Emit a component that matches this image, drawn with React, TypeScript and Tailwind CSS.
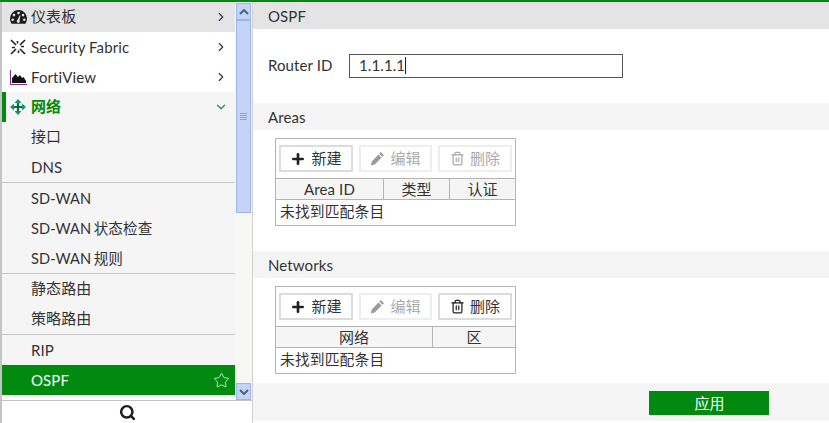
import React from "react";
import { ChevronRight, ChevronDown, Star, Search, Plus, Trash2 } from "lucide-react";

const Sub = ({ t, b, cjk, sd }: { t: string; b?: boolean; cjk?: boolean; sd?: boolean }) => (
  <div className={`h-[30px] pl-[29px] flex items-center text-[#333] bg-[#f5f5f5] ${b ? "border-b border-[#c8c8c8] box-content" : ""} ${sd ? "text-[14.6px] [word-spacing:-1.5px]" : ""}`}><span className={cjk ? "-mt-[2px]" : sd ? "mt-[1px]" : ""}>{t}</span></div>
);

const Top = ({ icon, t, bg, cjk }: { icon: React.ReactNode; t: string; bg: string; cjk?: boolean }) => (
  <div className={`h-[30px] flex items-center pl-[8px] pr-[7px] text-[#333] ${bg}`}>
    <span className="w-[21px] flex items-center justify-start">{icon}</span>
    <span className={`flex-1 ${cjk ? "-mt-[2px]" : ""}`}>{t}</span>
    <ChevronRight size={14} strokeWidth={2} className="text-[#34345a]" />
  </div>
);

const Btn = ({ icon, t, w, off }: { icon: React.ReactNode; t: string; w: string; off?: boolean }) => (
  <div className={`h-[27px] ${w} border-2 flex items-center justify-center gap-[5px] ${off ? "border-[#eeeeee] text-[#aaa]" : "border-[#dcdcdc] text-[#333]"}`}>
    {icon}
    <span className="-mt-[1px]">{t}</span>
  </div>
);

const PencilIcon = ({ c }: { c: string }) => (
  <svg width="15" height="15" viewBox="0 0 15 15"><path fill={c} d="M10.800 1l3.200 3.200-1.600 1.600-3.200-3.200zM8.400 3.400l3.200 3.200-6.800 6.800-4 1 1-4z" /></svg>
);

const Grid = ({ cols, del }: { cols: { t: string; w: string }[]; del?: boolean }) => (
  <div className="ml-[22px] w-[241px] border border-[#b4b4b4]">
    <div className="h-[39px] flex items-center pl-[3px] gap-[6px] border-b border-[#b4b4b4] box-content -mb-px">
      <Btn w="w-[74px]" t="新建" icon={<Plus size={16} strokeWidth={4} className="text-[#222]" />} />
      <Btn off w="w-[73px]" t="编辑" icon={<PencilIcon c="#a09a9a" />} />
      <Btn off={!del} w="w-[74px]" t="删除" icon={<Trash2 size={15} strokeWidth={2} className={del ? "text-[#222]" : "text-[#aaa]"} />} />
    </div>
    <div className="flex h-[20px] bg-[#f5f5f5] border-b border-[#b4b4b4] box-content mt-px">
      {cols.map((c, i) => (
        <div key={i} className={`${c.w} flex items-center justify-center text-[#333] ${i < cols.length - 1 ? "border-r border-[#b4b4b4]" : ""}`}>{c.t}</div>
      ))}
    </div>
    <div className="h-[25px] flex items-center pl-[4px] text-[#333] text-[14.8px]"><span className="-mt-[2px]">未找到匹配条目</span></div>
  </div>
);

const Dash = () => (
  <svg width="17" height="14" viewBox="0 0 17 14"><path fillRule="evenodd" fill="#1c1c1c" d="M8.500 0a8.500 8.500 0 0 0-8.500 8.500c0 2 .6 3.800 1.600 5.200h13.800c1-1.400 1.600-3.200 1.600-5.200A8.500 8.500 0 0 0 8.500 0zM8.500 1.800a1.300 1.300 0 1 1 0 2.600 1.300 1.300 0 0 1 0-2.600zM4 3.800a1.300 1.300 0 1 1 0 2.600 1.300 1.300 0 0 1 0-2.600zM13 3.800a1.300 1.300 0 1 1 0 2.600 1.300 1.300 0 0 1 0-2.600zM2.700 8.400a1.300 1.300 0 1 1 0 2.600 1.300 1.300 0 0 1 0-2.600zM14.300 8.400a1.300 1.300 0 1 1 0 2.600 1.300 1.300 0 0 1 0-2.600zM8.500 13a1.800 1.800 0 0 1-.9-3.300l2-4.200.8.300-.9 4.400A1.800 1.800 0 0 1 8.500 13z"/></svg>
);
const Fabric = () => (
  <svg width="16" height="16" viewBox="0 0 16 16" stroke="#222" strokeWidth="1.600" fill="none"><path d="M6 6 1 1M10 10l5 5M10 6l5-5M6 10l-5 5M7.500 2v2.500M2 8.500h3M11 7.500h3M8.500 11.500V14" /></svg>
);
const View = () => (
  <svg width="17" height="15" viewBox="0 0 17 15"><path d="M.5 0v14.500H17" stroke="#7a2a8a" strokeWidth="1" fill="none"/><path fill="#111" d="M2 13V8l3.500-4 2.500 3 2-2 2 3 1.500-1 2.500 4v2z"/></svg>
);
const Move = () => (
  <svg width="16" height="16" viewBox="0 0 16 16"><path stroke="#0d6b3c" strokeWidth="2.200" d="M8 2v12M2 8h12" /><path fill="#0a9a6a" d="M8 0l3.500 4h-7zM8 16l-3.500-4h7zM0 8l4-3.500v7zM16 8l-4 3.500v-7z"/></svg>
);

export default function App() {
  return (
    <div className="w-[829px] h-[423px] overflow-hidden bg-white border-t-[2px] border-[#008a0f] text-[15px] flex flex-col tracking-[0.1px]" style={{ fontFamily: 'Lato, "Noto Sans CJK SC", sans-serif' }}>
      <div className="flex flex-1 min-h-0">
        <div className="w-[253px] shrink-0 flex flex-col border-l-2 border-r border-[#c4c4c4] border-r-[#d0d0d0]">
          <div className="flex flex-1 min-h-0">
            <div className="w-[233px] shrink-0 overflow-hidden">
              <Top cjk bg="bg-[#e4e4e4]" t="仪表板" icon={<Dash />} />
              <Top bg="bg-white" t="Security Fabric" icon={<Fabric />} />
              <Top bg="bg-white" t="FortiView" icon={<View />} />
              <div className="h-[30px] flex items-center bg-[#f5f5f5] border-l-[4px] border-[#008a0f] pl-[4px] pr-[7px]">
                <span className="w-[21px] flex"><Move /></span>
                <span className="flex-1 font-bold text-[#008a0f] -mt-[2px]">网络</span>
                <ChevronDown size={14} className="text-[#1a8a5a]" />
              </div>
              <Sub cjk t="接口" />
              <Sub t="DNS" b />
              <Sub sd t="SD-WAN" />
              <Sub sd t="SD-WAN 状态检查" />
              <Sub sd t="SD-WAN 规则" b />
              <Sub cjk t="静态路由" />
              <Sub cjk t="策略路由" b />
              <Sub t="RIP" />
              <div className="h-[30px] pl-[29px] pr-[5px] flex items-center justify-between bg-[#008a0f] text-white">
                <span>OSPF</span>
                <Star size={17} strokeWidth={1.300} className="text-[#c8f0d0]" />
              </div>
            </div>
            <div className="w-[17px] shrink-0 flex flex-col bg-[#f7f7f5] pt-[1px]">
              <div className="h-[17px] mx-[1px] bg-[#c4d4f6] border border-[#9db4e8] flex items-center justify-center">
                <svg width="10" height="6" viewBox="0 0 10 6"><path d="M1 5l4-4 4 4" stroke="#4d6185" strokeWidth="2" fill="none" /></svg>
              </div>
              <div className="h-[193px] mx-[1px] bg-[#c4d4f6] border border-[#9db4e8] flex items-center justify-center">
                <svg width="7" height="8" viewBox="0 0 7 8"><path d="M0 .500h7M0 2.500h7M0 4.500h7M0 6.500h7" stroke="#8ea3d0" /></svg>
              </div>
              <div className="flex-1" />
              <div className="h-[17px] mx-[1px] bg-[#c4d4f6] border border-[#9db4e8] flex items-center justify-center">
                <svg width="10" height="6" viewBox="0 0 10 6"><path d="M1 1l4 4 4-4" stroke="#4d6185" strokeWidth="2" fill="none" /></svg>
              </div>
            </div>
          </div>
          <div className="h-[23px] shrink-0 border-t border-[#c4c4c4] flex items-center justify-center bg-white">
            <Search size={17} strokeWidth={3.500} className="text-[#1c1c1c]" />
          </div>
        </div>
        <div className="flex-1 min-w-0 flex flex-col">
          <div className="h-[27px] bg-[#e4e4e4] flex items-center pl-[15px] text-[#333]"><span className="mt-[1px]">OSPF</span></div>
          <div className="h-[74px] flex items-center pl-[15px] text-[#333]">
            <span className="w-[81px] -mt-[2px]">Router ID</span>
            <div className="w-[274px] h-[24px] border border-[#555] bg-white flex items-center pl-[9px] -mt-[1px]">
              1.1.1.1<span className="w-px h-[17px] bg-[#222]" />
            </div>
          </div>
          <div className="h-[27px] bg-[#f5f5f5] flex items-center pl-[15px] text-[#333]"><span className="mt-[1px]">Areas</span></div>
          <div className="pt-[8px] h-[121px]">
            <Grid cols={[{ t: "Area ID", w: "w-[108px]" }, { t: "类型", w: "w-[66px]" }, { t: "认证", w: "flex-1" }]} />
          </div>
          <div className="h-[27px] bg-[#f5f5f5] flex items-center pl-[15px] text-[#333]"><span className="mt-[1px]">Networks</span></div>
          <div className="pt-[8px] h-[105px]">
            <Grid del cols={[{ t: "网络", w: "w-[157px]" }, { t: "区", w: "flex-1" }]} />
          </div>
          <div className="h-[38px] bg-[#f5f5f5] flex items-start pl-[396px] pt-[8px]">
            <div className="w-[120px] h-[24px] bg-[#008a0f] text-white flex items-center justify-center pl-[1px]">应用</div>
          </div>
        </div>
      </div>
    </div>
  );
}
